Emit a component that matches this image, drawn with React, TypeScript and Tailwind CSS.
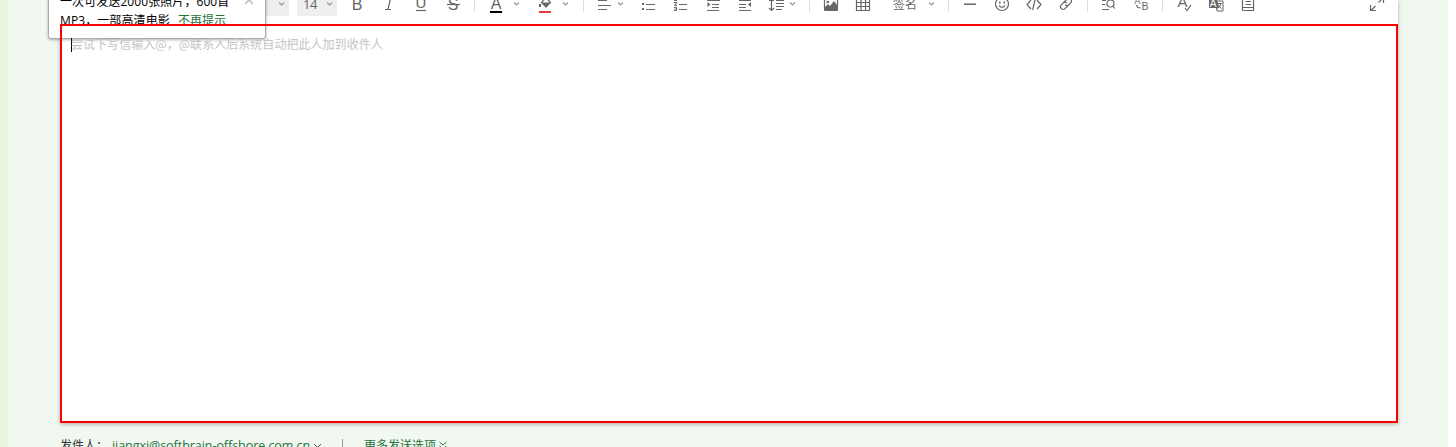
import type { ReactNode } from "react";

function Icon({ children }: { children: ReactNode }) {
  return (
    <svg width="16" height="16" viewBox="0 0 16 16" fill="none" stroke="#666" strokeWidth="1.2" className="shrink-0 overflow-visible">
      {children}
    </svg>
  );
}

function Cell({ children }: { children: ReactNode }) {
  return <div className="flex h-10 w-8 shrink-0 items-center justify-center">{children}</div>;
}

function Chevron() {
  return (
    <svg width="7" height="4" viewBox="0 0 7 4" fill="none" stroke="#999" strokeWidth="1.2" className="shrink-0">
      <path d="M1 .5 3.5 3 6 .5" />
    </svg>
  );
}

function Separator() {
  return <div className="h-[15px] w-px shrink-0 bg-[#ddd]" />;
}

const letter = { fontFamily: '"Liberation Sans", sans-serif', fill: "#666", stroke: "none", textAnchor: "middle" as const };

function Toolbar() {
  return (
    <div className="-mt-4 flex h-10 items-center pl-[181px] pr-[13px]">
      <div className="flex h-[23px] w-12 shrink-0 items-center justify-end bg-[#eee] pr-1">
        <Chevron />
      </div>
      <div className="ml-2 flex h-[23px] w-10 shrink-0 items-center justify-between bg-[#eee] pl-1.5 pr-1 font-['Open_Sans'] text-[13px] tracking-[-0.4px] text-[#666]">
        <span className="pt-px">14</span>
        <Chevron />
      </div>
      <div className="w-1 shrink-0" />
      <Cell><Icon><text x="8" y="14" fontSize="16" {...letter}>B</text></Icon></Cell>
      <Cell><Icon><path d="M6 1.5h7M4 13.5h6M9.7 1.5 7 13.5" /></Icon></Cell>
      <Cell><Icon><text x="8" y="12" fontSize="15" {...letter}>U</text><path d="M3 14.5h10" /></Icon></Cell>
      <Cell><Icon><text x="8" y="13.5" fontSize="16" {...letter}>S</text><path d="M2 8.5h13" /></Icon></Cell>
      <div className="w-[5px] shrink-0" />
      <Separator />
      <div className="w-[5px] shrink-0" />
      <Cell><Icon><text x="8" y="13" fontSize="16" {...letter}>A</text><path d="M2 16h12" stroke="#000" strokeWidth="2" /></Icon></Cell>
      <div className="ml-px flex w-4 shrink-0"><Chevron /></div>
      <Cell>
        <Icon>
          <path d="M9 1.5 13.5 6.5 9 11 4.5 6.5Z" />
          <path d="M4.5 6.5h9L9 11.5ZM2 8h2v3H2Z" fill="#666" stroke="none" />
          <path d="M2 16h12" stroke="#e03e36" strokeWidth="2" />
        </Icon>
      </Cell>
      <div className="ml-px flex w-[21px] shrink-0"><Chevron /></div>
      <Separator />
      <div className="w-1 shrink-0" />
      <Cell><Icon><path d="M2 4.5h9M2 9.5h13M2 13.5h9" /></Icon></Cell>
      <div className="-ml-[3px] flex w-[15px] shrink-0"><Chevron /></div>
      <Cell><Icon><path d="M6 8.5h9M6 13.5h9" /><path d="M2 7h2v2H2ZM2 12h2v2H2ZM2 2h2v2H2Z" fill="#666" stroke="none" /></Icon></Cell>
      <Cell><Icon><path d="M7 8.5h8M7 13.5h8M7 3.5h8" /><path d="M2 6.5h3L2.5 9.5H5M2 11.5h2.5v3H2M2.5 13H4M2 4.5h3M3.5 1v3" strokeWidth="1" /></Icon></Cell>
      <Cell><Icon><path d="M3 4.5h13M8 8.5h7M8 11.5h7M3 14.5h12" strokeWidth="1.2" /><path d="M3.5 6v5L6.5 8.5Z" fill="#666" stroke="none" /></Icon></Cell>
      <Cell><Icon><path d="M3 4.5h12M3 8.5h7M3 11.5h7M3 14.5h12" strokeWidth="1.2" /><path d="M15 6v5L12 8.5Z" fill="#666" stroke="none" /></Icon></Cell>
      <Cell><Icon><path d="M8 4.5h8M8 7.5h8M8 10.5h8M8 13.5h6" strokeWidth="1.2" /><path d="M3.5 3v11M1 12l2.5 2.5L6 12M1 4.5h5" /></Icon></Cell>
      <div className="-ml-[3px] flex w-5 shrink-0"><Chevron /></div>
      <Separator />
      <div className="w-[5px] shrink-0" />
      <Cell>
        <Icon>
          <rect x="1.5" y="2" width="13" height="12.5" rx="1" />
          <path d="M2 14v-3l3-3 2 2 4-5 3 4v5Z" fill="#666" stroke="none" />
          <circle cx="4.8" cy="6" r="1.3" fill="#666" stroke="none" />
        </Icon>
      </Cell>
      <Cell><Icon><path d="M1.5 2.5h13v12h-13ZM1.5 6.5h13M1.5 10.5h13M6 2.5v12M10.5 2.5v12" /></Icon></Cell>
      <div className="ml-3.5 w-[35px] shrink-0 whitespace-nowrap pt-px text-[12px] leading-4 text-[#666]">签名</div>
      <div className="flex w-5 shrink-0"><Chevron /></div>
      <Separator />
      <div className="w-[5px] shrink-0" />
      <Cell><Icon><path d="M2 8.2h12" strokeWidth="1.5" /></Icon></Cell>
      <Cell><Icon><circle cx="8" cy="8" r="6.5" /><path d="M5 9.5q3 3.5 6 0" /><path d="M5 5.5h1.5v2H5ZM9.5 5.5H11v2H9.5Z" fill="#666" stroke="none" /></Icon></Cell>
      <Cell><Icon><path d="M5 4 1 8.5 5 13M11 4l4 4.5L11 13M9.3 2.5 6.7 14" /></Icon></Cell>
      <Cell>
        <Icon>
          <g transform="rotate(-45 8 8)">
            <path d="M9 10.5H4a2.6 2.6 0 0 1 0-5.2h2.5a2.6 2.6 0 0 1 2.6 2.6" />
            <path d="M7 5.3h5a2.6 2.6 0 0 1 0 5.2H9.5A2.6 2.6 0 0 1 7 8" />
          </g>
        </Icon>
      </Cell>
      <div className="w-[5px] shrink-0" />
      <Separator />
      <div className="w-[5px] shrink-0" />
      <Cell><Icon><path d="M1 4.5h4M1 8.5h3.5M1 13.5h7" /><circle cx="9.5" cy="7.5" r="3.5" /><path d="m11.8 10 2 2.5" /></Icon></Cell>
      <Cell><Icon><text x="4.5" y="8" fontSize="9.5" {...letter}>A</text><text x="12" y="14" fontSize="10.5" {...letter}>B</text><path d="M3.5 9q.5 3 4 3" /></Icon></Cell>
      <div className="w-[5px] shrink-0" />
      <Separator />
      <div className="w-[5px] shrink-0" />
      <Cell><Icon><text x="6.5" y="11" fontSize="15" {...letter}>A</text><path d="m9 12 2 2.5L15 9" /></Icon></Cell>
      <Cell>
        <Icon>
          <path d="M1 2h8l2 10H1Z" fill="#666" stroke="none" />
          <path d="M10 5h5v10H9l-.5-3" strokeWidth="1" />
          <text x="5" y="10.5" fontSize="10" {...letter} fill="#fff">A</text>
          <path d="M9.5 7.5h4.5M13 7.5q-1 4-3.5 5M10.5 9q1 2.5 3 3.5" strokeWidth="1" />
        </Icon>
      </Cell>
      <Cell><Icon><path d="M2.5 1.5h11v13h-10q-1.3 0-1.3-1.5t1.3-1.5h10M2.5 12V1.5M5.5 5.5h5.5M5.5 8.5h5.5" /></Icon></Cell>
      <div className="ml-auto flex h-10 items-center">
        <Icon><path d="m9.5 6.5 4.8-4.8M10 1.5h4.5V7M6.5 10 2 14.5M1.5 9v5.5h5.5" /></Icon>
      </div>
    </div>
  );
}

export default function App() {
  return (
    <div className="relative flex h-[447px] w-full overflow-hidden bg-white font-['Open_Sans','Noto_Sans_CJK_SC',sans-serif]">
      <div className="w-2 shrink-0 bg-[#e6f5dc]" />
      <main className="flex h-full min-w-0 flex-1 flex-col bg-[#f0f8f0] pl-[52px]">
        <div className="flex h-[423px] w-[1338px] shrink-0 flex-col bg-white shadow-[0_1px_4px_rgba(0,0,0,0.3)]">
          <div className="flow-root h-6 shrink-0"><Toolbar /></div>
          <section className="relative z-10 flex h-[399px] items-start border-2 border-[#fe0000] pl-[9px] pt-[10px]">
            <div className="mt-[2px] h-[14px] w-px bg-black" />
            <p className="-ml-px whitespace-nowrap font-['Noto_Sans_CJK_SC',sans-serif] text-[12px] leading-4 tracking-[0.04px] text-[#c4c4c4]">
              尝试下写信输入@，@联系人后系统自动把此人加到收件人
            </p>
          </section>
        </div>
        <footer className="mt-[14px] flex h-[18px] shrink-0 items-center whitespace-nowrap text-[12px] leading-[18px] text-[#26733c]">
          <span className="w-[52px] text-[#333]">发件人：</span>
          <span className="w-[201px] text-[12.5px] tracking-[-0.05px]">jiangxi@softbrain-offshore.com.cn</span>
          <svg width="9" height="6" viewBox="0 0 9 6" fill="none" stroke="#555"><path d="m1 1 3.5 3.5L8 1" /></svg>
          <span className="-mt-0.5 ml-5 h-3 w-px bg-[#999]" />
          <span className="ml-[21px]">更多发送选项</span>
          <svg width="8" height="9" viewBox="0 0 8 9" fill="none" stroke="#26733c" className="-mt-0.5 ml-[3px]"><path d="m.5 1 3.5 3 3.5-3M.5 5 4 8l3.5-3" /></svg>
        </footer>
      </main>
      <div className="w-2 shrink-0 bg-white" />
      <aside className="absolute left-12 top-[-30px] h-[69px] w-[218px] rounded-[3px] border border-[#aaa] bg-white shadow-[0_1px_3px_rgba(0,0,0,0.3)]">
        <div className="flex pl-[11px] pt-[21px] text-[12px] leading-[19px] text-black">
          <p className="w-[184px] whitespace-nowrap">
            <span className="tracking-[0.08px]">一次可发送2000张照片，600首</span>
            <br />
            <span className="tracking-[0.1px]">MP3，一部高清电影</span>
            <span className="ml-2 text-[#26733c]">不再提示</span>
          </p>
          <svg width="10" height="10" viewBox="0 0 10 10" fill="none" stroke="#bbb" strokeWidth="1.5" className="mt-[3px]"><path d="m1 1 8 8M9 1 1 9" /></svg>
        </div>
      </aside>
    </div>
  );
}
